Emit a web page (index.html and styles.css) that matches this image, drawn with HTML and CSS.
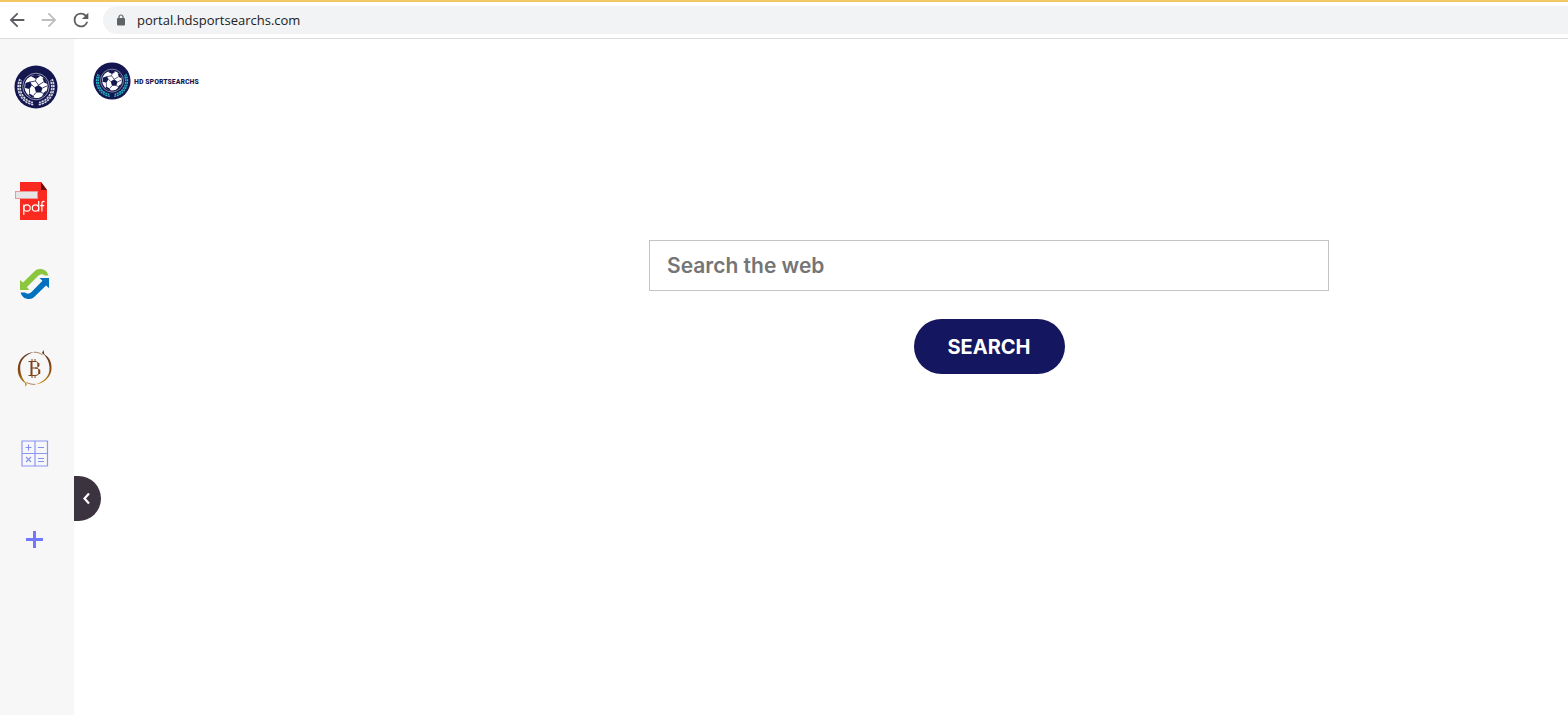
FILE: index.html
```html
<!DOCTYPE html>
<html lang="en">
<head>
    <meta charset="UTF-8">
    <meta name="viewport" content="width=device-width, initial-scale=1.0">
    <title>HD SportSearchs</title>
    <link rel="stylesheet" href="styles.css">
</head>
<body>
    <!-- ball and badge artwork, used by both logos -->
    <svg class="defs" width="0" height="0" aria-hidden="true">
        <symbol id="badge" viewBox="0 0 44 44">
            <circle cx="22" cy="22" r="21.5" fill="#14164f"/>
            <g fill="none" stroke="currentColor" stroke-width="1.7" stroke-dasharray="2.3 0.8">
                <path d="M6 14A18 18 0 0 0 20 39.800"/>
                <path d="M38 14A18 18 0 0 1 24 39.800"/>
                <path stroke-dashoffset="1.5" d="M7.500 15.500A15.800 15.800 0 0 0 19 37.500"/>
                <path stroke-dashoffset="1.5" d="M36.500 15.500A15.800 15.800 0 0 1 25 37.500"/>
            </g>
            <circle cx="22" cy="21.500" r="13.300" fill="#14164f" stroke="#9fa1b8" stroke-width="0.900"/>
            <circle cx="22" cy="21.500" r="11.500" fill="#fff"/>
            <g fill="#14164f">
                <path d="M20.500 22.500l4-2.500 4 3-1.500 4.500h-5z"/>
                <path d="M11.500 18l4.500-1.500 2 3.500-2.500 4-4.500-1z"/>
                <path d="M17 11.200c3-1.500 6.500-1.500 9 0l-4 2.800z"/>
                <path d="M28.500 13l2.500.5 2.300 5.500-3.300-1.500z"/>
                <path d="M15.500 28.500l4 2.500 1 2c-2.500-.3-4.500-1.500-6-3.500z"/>
                <path d="M30.500 27l2.200-1.500c-.8 2.800-2.700 5-5 6.200z"/>
            </g>
            <path d="M22 14l-.5 2-5.500 1M21.500 16l3 4M29.500 17l-5 3M18 20l2.500 2.500M22 27.500l-2.500 3M27 27.500l3 1M28.500 23l4.500-2M15.500 24v4.500" stroke="#14164f" stroke-width="0.800" fill="none"/>
        </symbol>
    </svg>

    <header class="toolbar">
        <button type="button" class="nav-btn" aria-label="Back">
            <svg viewBox="0 0 24 24" width="22" height="22"><path fill="currentColor" d="M20 11H7.830l5.590-5.590L12 4l-8 8 8 8 1.410-1.410L7.830 13H20z"/></svg>
        </button>
        <button type="button" class="nav-btn nav-btn-off" aria-label="Forward" disabled>
            <svg viewBox="0 0 24 24" width="22" height="22"><path fill="currentColor" d="M12 4l-1.410 1.410L16.170 11H4v2h12.170l-5.580 5.590L12 20l8-8z"/></svg>
        </button>
        <button type="button" class="nav-btn" aria-label="Reload">
            <svg viewBox="0 0 24 24" width="22" height="22"><path fill="currentColor" d="M17.650 6.350A7.960 7.960 0 0 0 12 4a8 8 0 1 0 7.730 10h-2.080A6 6 0 1 1 12 6c1.660 0 3.140.69 4.220 1.780L13 11h7V4z"/></svg>
        </button>
        <div class="address">
            <svg viewBox="0 0 10 12" width="10" height="12" aria-hidden="true">
                <rect x="1" y="4" width="8" height="7.500" rx="1" fill="#5f6368"/>
                <path d="M3 4.500V3a2 2 0 0 1 4 0v1.500" fill="none" stroke="#5f6368" stroke-width="1.200"/>
            </svg>
            <input type="text" class="address-input" aria-label="Address" value="portal.hdsportsearchs.com">
        </div>
    </header>

    <div class="page">
        <nav class="sidebar">
            <a href="#" class="side-logo" aria-label="Home"><svg width="44" height="44"><use href="#badge"/></svg></a>
            <a href="#" class="side-link" aria-label="PDF">
                <svg width="40" height="44" viewBox="0 0 40 44">
                    <path d="M6 4h21l6 8v30H6z" fill="#fa2a20"/>
                    <path d="M27 4l6 8h-6z" fill="#6d0d0d"/>
                    <rect x="1.500" y="13.500" width="22" height="7" fill="#e6e6e6" stroke="#e59a9d"/>
                    <g fill="none" stroke="#fff" stroke-width="1.200">
                        <circle cx="13" cy="30" r="3.200"/><path d="M9.800 26.500V37"/>
                        <circle cx="21.500" cy="30" r="3.200"/><path d="M24.700 23v10.500"/>
                        <path d="M30.500 23.600c-2-.5-2.600.4-2.600 2v7.900M26.200 27.600h4"/>
                    </g>
                </svg>
            </a>
            <a href="#" class="side-link" aria-label="Converter">
                <svg width="40" height="44" viewBox="0 0 40 44">
                    <path d="M34.500 12.500C33 8 30 6 26 6c-3 0-4.500 1.200-6 2.700L9 19.500 6 17v10h9.500l-2.700-2.700L24 13c2.500-2.200 5-2 6.500-.5z" fill="#8cc63f"/>
                    <path d="M6.500 29.500C8 34 11 36 15 36c3 0 4.500-1.200 6-2.700L32 22.500l3 2.500V15h-9.500l3 2.800L17.500 29c-2.500 2.200-5 2-6.500.5z" fill="#0071bc"/>
                </svg>
            </a>
            <a href="#" class="side-link" aria-label="Bitcoin">
                <svg width="40" height="44" viewBox="0 0 40 44">
                    <defs>
                        <linearGradient id="gold" x1="0" y1="0" x2="0" y2="1">
                            <stop offset="0" stop-color="#5b2a14"/>
                            <stop offset="0.600" stop-color="#8a5014"/>
                            <stop offset="1" stop-color="#c99a10"/>
                        </linearGradient>
                    </defs>
                    <path d="M28 5l1.500-3 .8 4.200C35 9 38 14 37.500 21c-.5 8-7.500 15-17 15.500C30 34 36 28 35.500 19.500 35.300 13 32 8 28 5z" fill="url(#gold)"/>
                    <path d="M13 36l-1.500 3-.5-4C6.500 32 3.500 27 3.800 20.500 4.300 11 11 4.500 20.500 4 11 6.500 5.800 12.500 6.200 20.500c.3 6.500 3 12 6.800 15.500z" fill="url(#gold)"/>
                    <path d="M20 4.200c3 0 6 .8 8.500 2.600M21 36.400c-3 0-6-.6-8.500-2" fill="none" stroke="#8a5014" stroke-width="0.700"/>
                    <g fill="none" stroke="#7a431a">
                        <path stroke-width="1" d="M14.500 13.500H21c5 0 5 6.500 0 6.500h-3M21 20c6.500 0 6 7.500 0 7.500h-6.500M18 11v2.500M21 11v2.500M18 27.500V30M21 27.500V30"/>
                        <path stroke-width="2" d="M17.500 13.500v14M24.300 15v3.500M25.200 21.500v4.500"/>
                    </g>
                </svg>
            </a>
            <a href="#" class="side-link" aria-label="Calculator">
                <svg width="40" height="44" viewBox="0 0 40 44">
                    <path d="M8 8h25.500v25H8zM21 8v25M8 20.500h25" fill="none" stroke="#8c96f5" stroke-width="1.200"/>
                    <path d="M11.500 14.500h6M14.500 11.500v6M24 14.500h6M12 24l5 5M17 24l-5 5M24 25.500h6M24 28.500h6" fill="none" stroke="#8490f0" stroke-width="1.100"/>
                </svg>
            </a>
            <a href="#" class="side-link" aria-label="Add">
                <svg width="40" height="44" viewBox="0 0 40 44"><path d="M12 21.500h17M20.500 13v17" stroke="#7178fb" stroke-width="3"/></svg>
            </a>
            <button type="button" class="collapse" aria-label="Collapse sidebar">
                <svg width="8" height="12" viewBox="0 0 8 12"><path d="M7 .5L2.500 5.500l4.500 5" fill="none" stroke="#fff" stroke-width="2.200"/></svg>
            </button>
        </nav>

        <main class="content">
            <a href="#" class="brand">
                <svg width="38" height="38" aria-hidden="true"><use href="#badge"/></svg>
                <span>HD SPORTSEARCHS</span>
            </a>
            <form class="search">
                <input type="text" class="search-input" aria-label="Search the web" placeholder="Search the web">
                <button type="submit" class="search-btn">SEARCH</button>
            </form>
        </main>
    </div>
</body>
</html>
```
FILE: styles.css
```css
* {
    box-sizing: border-box;
}
body {
    margin: 0;
    min-height: 100vh;
    display: flex;
    flex-direction: column;
    background-color: #fff;
    font-family: Inter, sans-serif;
}
button {
    border: none;
    padding: 0;
    cursor: pointer;
}
svg {
    display: block;
}
.defs {
    position: absolute;
}

/* browser bar */
.toolbar {
    display: flex;
    align-items: center;
    height: 39px;
    padding-left: 1px;
    border-top: 2px solid #f2c764;
    border-bottom: 1px solid #dadbdc;
}
.nav-btn {
    display: flex;
    justify-content: center;
    width: 32px;
    background: none;
    color: #5a5d61;
}
.nav-btn-off {
    color: #bcbec0;
}
.address {
    display: flex;
    align-items: center;
    gap: 11px;
    flex: 1;
    height: 28px;
    margin-left: 6px;
    padding-left: 13px;
    border-radius: 14px 0 0 14px;
    background-color: #f1f3f4;
}
.address-input {
    flex: 1;
    padding: 0;
    border: none;
    outline: none;
    background: none;
    color: #202124;
    font: 13px "Open Sans", sans-serif;
}

.page {
    display: flex;
    flex: 1;
}

/* left sidebar */
.sidebar {
    position: relative;
    display: flex;
    flex-direction: column;
    gap: 41px;
    width: 74px;
    padding: 26px 14px;
    background-color: #f7f7f7;
}
.side-logo {
    margin-bottom: 28px;
    color: #d4d5df;
}
.collapse {
    position: absolute;
    top: 437px;
    left: 100%;
    display: flex;
    align-items: center;
    width: 27px;
    height: 45px;
    padding-left: 8px;
    border-radius: 0 23px 23px 0;
    background-color: #3b3340;
}

/* main area */
.content {
    display: flex;
    align-items: flex-start;
    flex: 1;
}
.brand {
    display: flex;
    align-items: center;
    gap: 3px;
    width: 336px;
    padding: 23px 0 0 19px;
    color: #23b5c4;
    text-decoration: none;
}
.brand span {
    color: #14164f;
    font: bold 8px "Liberation Sans Narrow", "Roboto Condensed", Roboto, sans-serif;
}
.search {
    display: flex;
    flex-direction: column;
    align-items: center;
    gap: 28px;
    flex: 1;
    padding: 201px 20px 0;
}
.search-input {
    width: 100%;
    max-width: 680px;
    height: 51px;
    padding: 0 17px;
    border: 1px solid #c4c4c4;
    font: 600 21px Inter, sans-serif;
}
.search-input::placeholder {
    color: #757575;
}
.search-btn {
    width: 151px;
    height: 55px;
    border-radius: 28px;
    background-color: #14165f;
    color: #fff;
    font: bold 20px Inter, sans-serif;
}
```
